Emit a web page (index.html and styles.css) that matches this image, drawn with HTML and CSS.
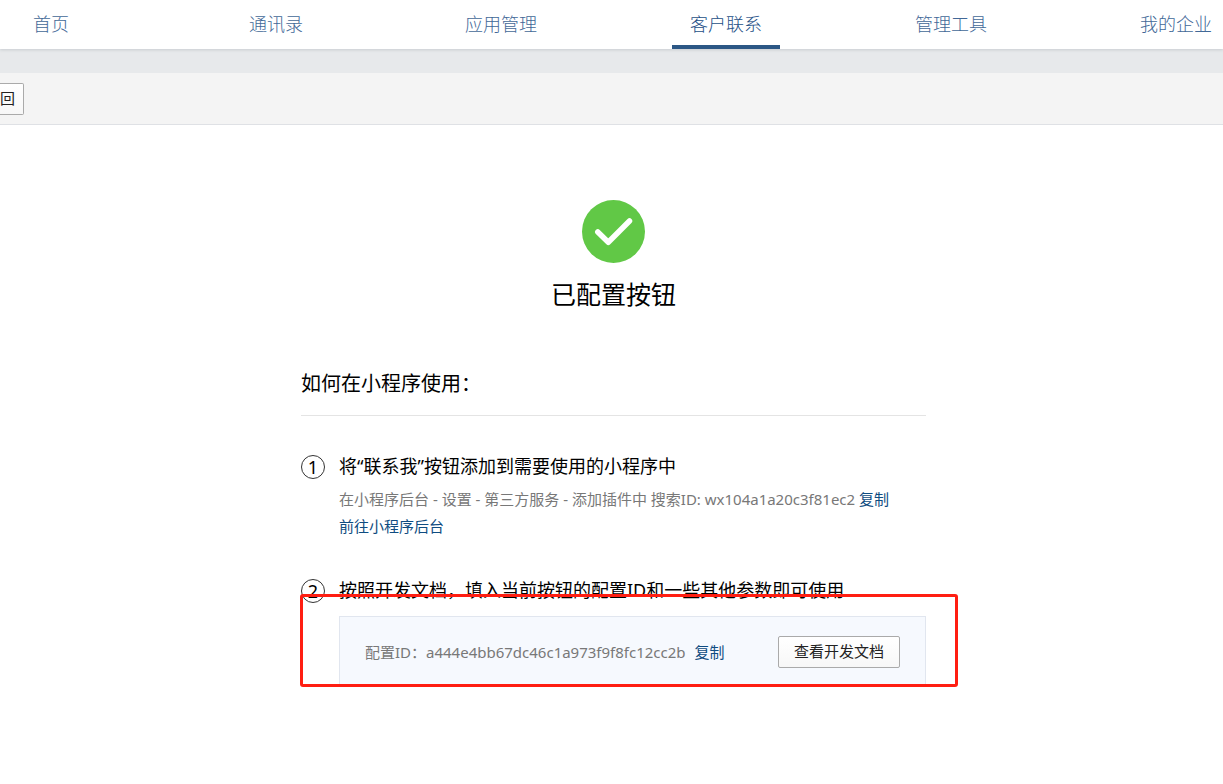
FILE: index.html
```html
<!DOCTYPE html>
<html lang="zh-CN">
<head>
<meta charset="utf-8">
<meta name="viewport" content="width=device-width, initial-scale=1">
<title>客户联系</title>
<link rel="stylesheet" href="styles.css">
</head>
<body>
<header class="header">
  <nav class="nav">
    <a class="nav-item" href="#"><span class="nav-label">首页</span></a>
    <a class="nav-item" href="#"><span class="nav-label">通讯录</span></a>
    <a class="nav-item" href="#"><span class="nav-label">应用管理</span></a>
    <a class="nav-item" href="#" aria-current="page"><span class="nav-label nav-label-active">客户联系</span></a>
    <a class="nav-item" href="#"><span class="nav-label">管理工具</span></a>
    <a class="nav-item" href="#"><span class="nav-label">我的企业</span></a>
  </nav>
</header>
<div class="toolbar">
  <button class="button button-back" type="button" aria-label="返回">回</button>
</div>
<main class="content">
  <section class="result">
    <svg class="result-icon" viewBox="0 0 63 63" aria-hidden="true">
      <circle cx="31.500" cy="31.500" r="31.500" fill="#61c846"/>
      <path d="M15.800 32 L26.300 42.300 L47.500 21" fill="none" stroke="#fff" stroke-width="5.500" stroke-linecap="round" stroke-linejoin="round"/>
    </svg>
    <h1 class="result-title">已配置按钮</h1>
  </section>
  <h2 class="guide-title">如何在小程序使用：</h2>
  <ol class="steps">
    <li class="step">
      <span class="step-number">1</span>
      <div class="step-body">
        <h3 class="step-title">将“联系我”按钮添加到需要使用的小程序中</h3>
        <p class="step-text">在小程序后台 - 设置 - 第三方服务 - 添加插件中 搜索ID: wx104a1a20c3f81ec2 <a class="link" href="#">复制</a></p>
        <p class="step-text"><a class="link" href="#">前往小程序后台</a></p>
      </div>
    </li>
    <li class="step">
      <span class="step-number">2</span>
      <div class="step-body">
        <h3 class="step-title">按照开发文档，填入当前按钮的配置ID和一些其他参数即可使用</h3>
        <div class="config">
          <span class="config-text">配置ID：a444e4bb67dc46c1a973f9f8fc12cc2b</span>
          <a class="link" href="#">复制</a>
          <button class="button button-docs" type="button">查看开发文档</button>
        </div>
      </div>
      <div class="highlight"></div>
    </li>
  </ol>
</main>
</body>
</html>
```
FILE: styles.css
```css
* {
  box-sizing: border-box;
}

body {
  margin: 0;
  background: #fff;
  color: #000;
  font-family: "Noto Sans", "Noto Sans CJK SC", sans-serif;
  font-size: 15px;
  font-weight: 400;
  overflow-x: hidden;
}

h1, h2, h3, p, ol {
  margin: 0;
  padding: 0;
  font-weight: inherit;
}

a {
  text-decoration: none;
}

.header {
  position: relative;
  padding-left: 4px;
  background: #fff;
  box-shadow: 0 1px 3px #c8ccd0;
  overflow: clip;
  overflow-clip-margin: 4px;
}

.nav {
  display: flex;
  justify-content: center;
  height: 49px;
}

.nav-item {
  display: flex;
  flex: none;
  justify-content: center;
  width: 225px;
  color: #426897;
  font-size: 18px;
  font-weight: 300;
  line-height: 49px;
}

.nav-label {
  padding: 0 18px;
}

.nav-label-active {
  border-bottom: 4px solid #2c5785;
  color: #244f86;
}

.toolbar {
  display: flex;
  align-items: center;
  height: 76px;
  padding-top: 1px;
  border-top: 24px solid #e7e9eb;
  border-bottom: 1px solid #dfe1e5;
  background: #f4f4f4;
}

.button {
  height: 32px;
  border: 1px solid #aaa;
  border-radius: 2px;
  background: linear-gradient(#fff, #f7f7f7);
  color: #222;
  font: inherit;
  line-height: 28px;
}

.button-back {
  padding: 0 8px 2px 0;
  border-left: 0;
  border-radius: 0 2px 2px 0;
}

.content {
  width: 629px;
  max-width: 100%;
  margin: 0 auto;
  padding: 75px 0 40px 4px;
  position: relative;
}

.result {
  display: flex;
  flex-direction: column;
  align-items: center;
  gap: 12px;
}

.result-icon {
  width: 63px;
  height: 63px;
}

.result-title {
  font-size: 25px;
  line-height: 38px;
}

.guide-title {
  margin-top: 55px;
  padding-bottom: 15px;
  border-bottom: 1px solid #e4e4e4;
  font-size: 20px;
  line-height: 32px;
}

.steps {
  display: flex;
  flex-direction: column;
  gap: 37px;
  padding-top: 37px;
  list-style: none;
}

.step {
  display: flex;
  gap: 14px;
  position: relative;
}

.step-number {
  display: flex;
  flex: none;
  align-items: center;
  justify-content: center;
  width: 24px;
  height: 24px;
  margin-top: 2px;
  border: 1px solid #333;
  border-radius: 50%;
  font-size: 18px;
  line-height: 20px;
}

.step-body {
  flex: 1;
}

.step-title {
  padding-bottom: 6px;
  font-size: 18px;
  line-height: 27px;
}

.step-text {
  color: #787878;
  line-height: 27px;
}

.link {
  color: #0f4c81;
}

.config {
  display: flex;
  align-items: center;
  gap: 9px;
  height: 71px;
  margin-top: 6px;
  padding: 0 25px;
  border: 1px solid #e1e6ef;
  background: #f6f9fe;
}

.config-text {
  color: #787878;
}

.button-docs {
  margin-left: auto;
  padding: 0 15px 2px;
}

/* Frame drawn over the configuration area */
.highlight {
  position: absolute;
  top: 17px;
  right: -32px;
  bottom: 0;
  left: -1px;
  border: 3px solid #ff1e12;
  border-radius: 3px;
  pointer-events: none;
}
```
